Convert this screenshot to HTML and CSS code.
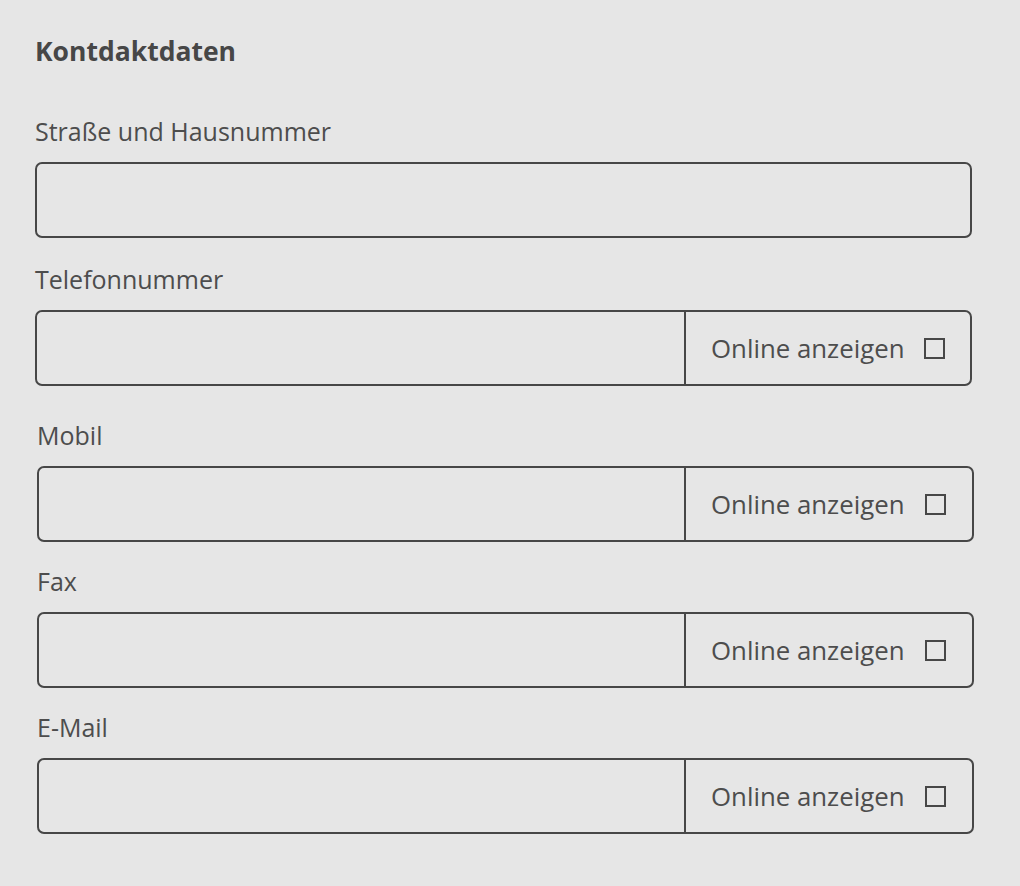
FILE: index.html
```html
<!DOCTYPE html>
<html lang="de">
<head>
<meta charset="utf-8">
<title>Kontaktdaten</title>
<link rel="stylesheet" href="styles.css">
</head>
<body>
<div class="form">
  <h2 class="title">Kontdaktdaten</h2>
  <div class="field field-first">
    <label class="label">Straße und Hausnummer</label>
    <div class="box"><div class="box-input"></div></div>
  </div>
  <div class="field">
    <label class="label">Telefonnummer</label>
    <div class="box"><div class="box-input"></div><div class="addon"><span class="addon-text">Online anzeigen</span><span class="check"></span></div></div>
  </div>
  <div class="group">
    <div class="field field-mobil">
      <label class="label">Mobil</label>
      <div class="box"><div class="box-input"></div><div class="addon"><span class="addon-text">Online anzeigen</span><span class="check"></span></div></div>
    </div>
    <div class="field">
      <label class="label">Fax</label>
      <div class="box"><div class="box-input"></div><div class="addon"><span class="addon-text">Online anzeigen</span><span class="check"></span></div></div>
    </div>
    <div class="field">
      <label class="label">E-Mail</label>
      <div class="box"><div class="box-input"></div><div class="addon"><span class="addon-text">Online anzeigen</span><span class="check"></span></div></div>
    </div>
  </div>
</div>
</body>
</html>
```

FILE: styles.css
```css
html, body {
  margin: 0;
  padding: 0;
  background: #e6e6e6;
}
body {
  font-family: "Open Sans", "Noto Sans", sans-serif;
  color: #4d4d4d;
}
.form {
  padding: 33px 0 0 35px;
}
.title {
  margin: 0;
  font-size: 26.5px;
  font-weight: 700;
  line-height: 36px;
  color: #474747;
}
.field {
  width: 937px;
  display: flex;
  flex-direction: column;
  margin-top: 24px;
}
.field-first {
  margin-top: 47px;
}
.field + .field {
  margin-top: 26px;
}
.group .field + .field {
  margin-top: 24px;
}
.group .field-mobil {
  margin-top: 34px;
}
.group {
  padding-left: 2px;
}
.label {
  display: block;
  font-size: 25px;
  line-height: 30px;
  margin-bottom: 16px;
}
.box {
  display: flex;
  height: 76px;
  box-sizing: border-box;
  border: 2px solid #474747;
  border-radius: 7px;
}
.box-input {
  flex: 1;
}
.addon {
  width: 286px;
  box-sizing: border-box;
  border-left: 2px solid #474747;
  display: flex;
  align-items: center;
  justify-content: space-between;
  padding: 0 25px 0 25px;
}
.group .addon {
  width: 288px;
  padding-right: 26px;
}
.addon-text {
  font-size: 25.8px;
  line-height: 30px;
}
.check {
  width: 21px;
  height: 21px;
  box-sizing: border-box;
  border: 2px solid #474747;
}
```
